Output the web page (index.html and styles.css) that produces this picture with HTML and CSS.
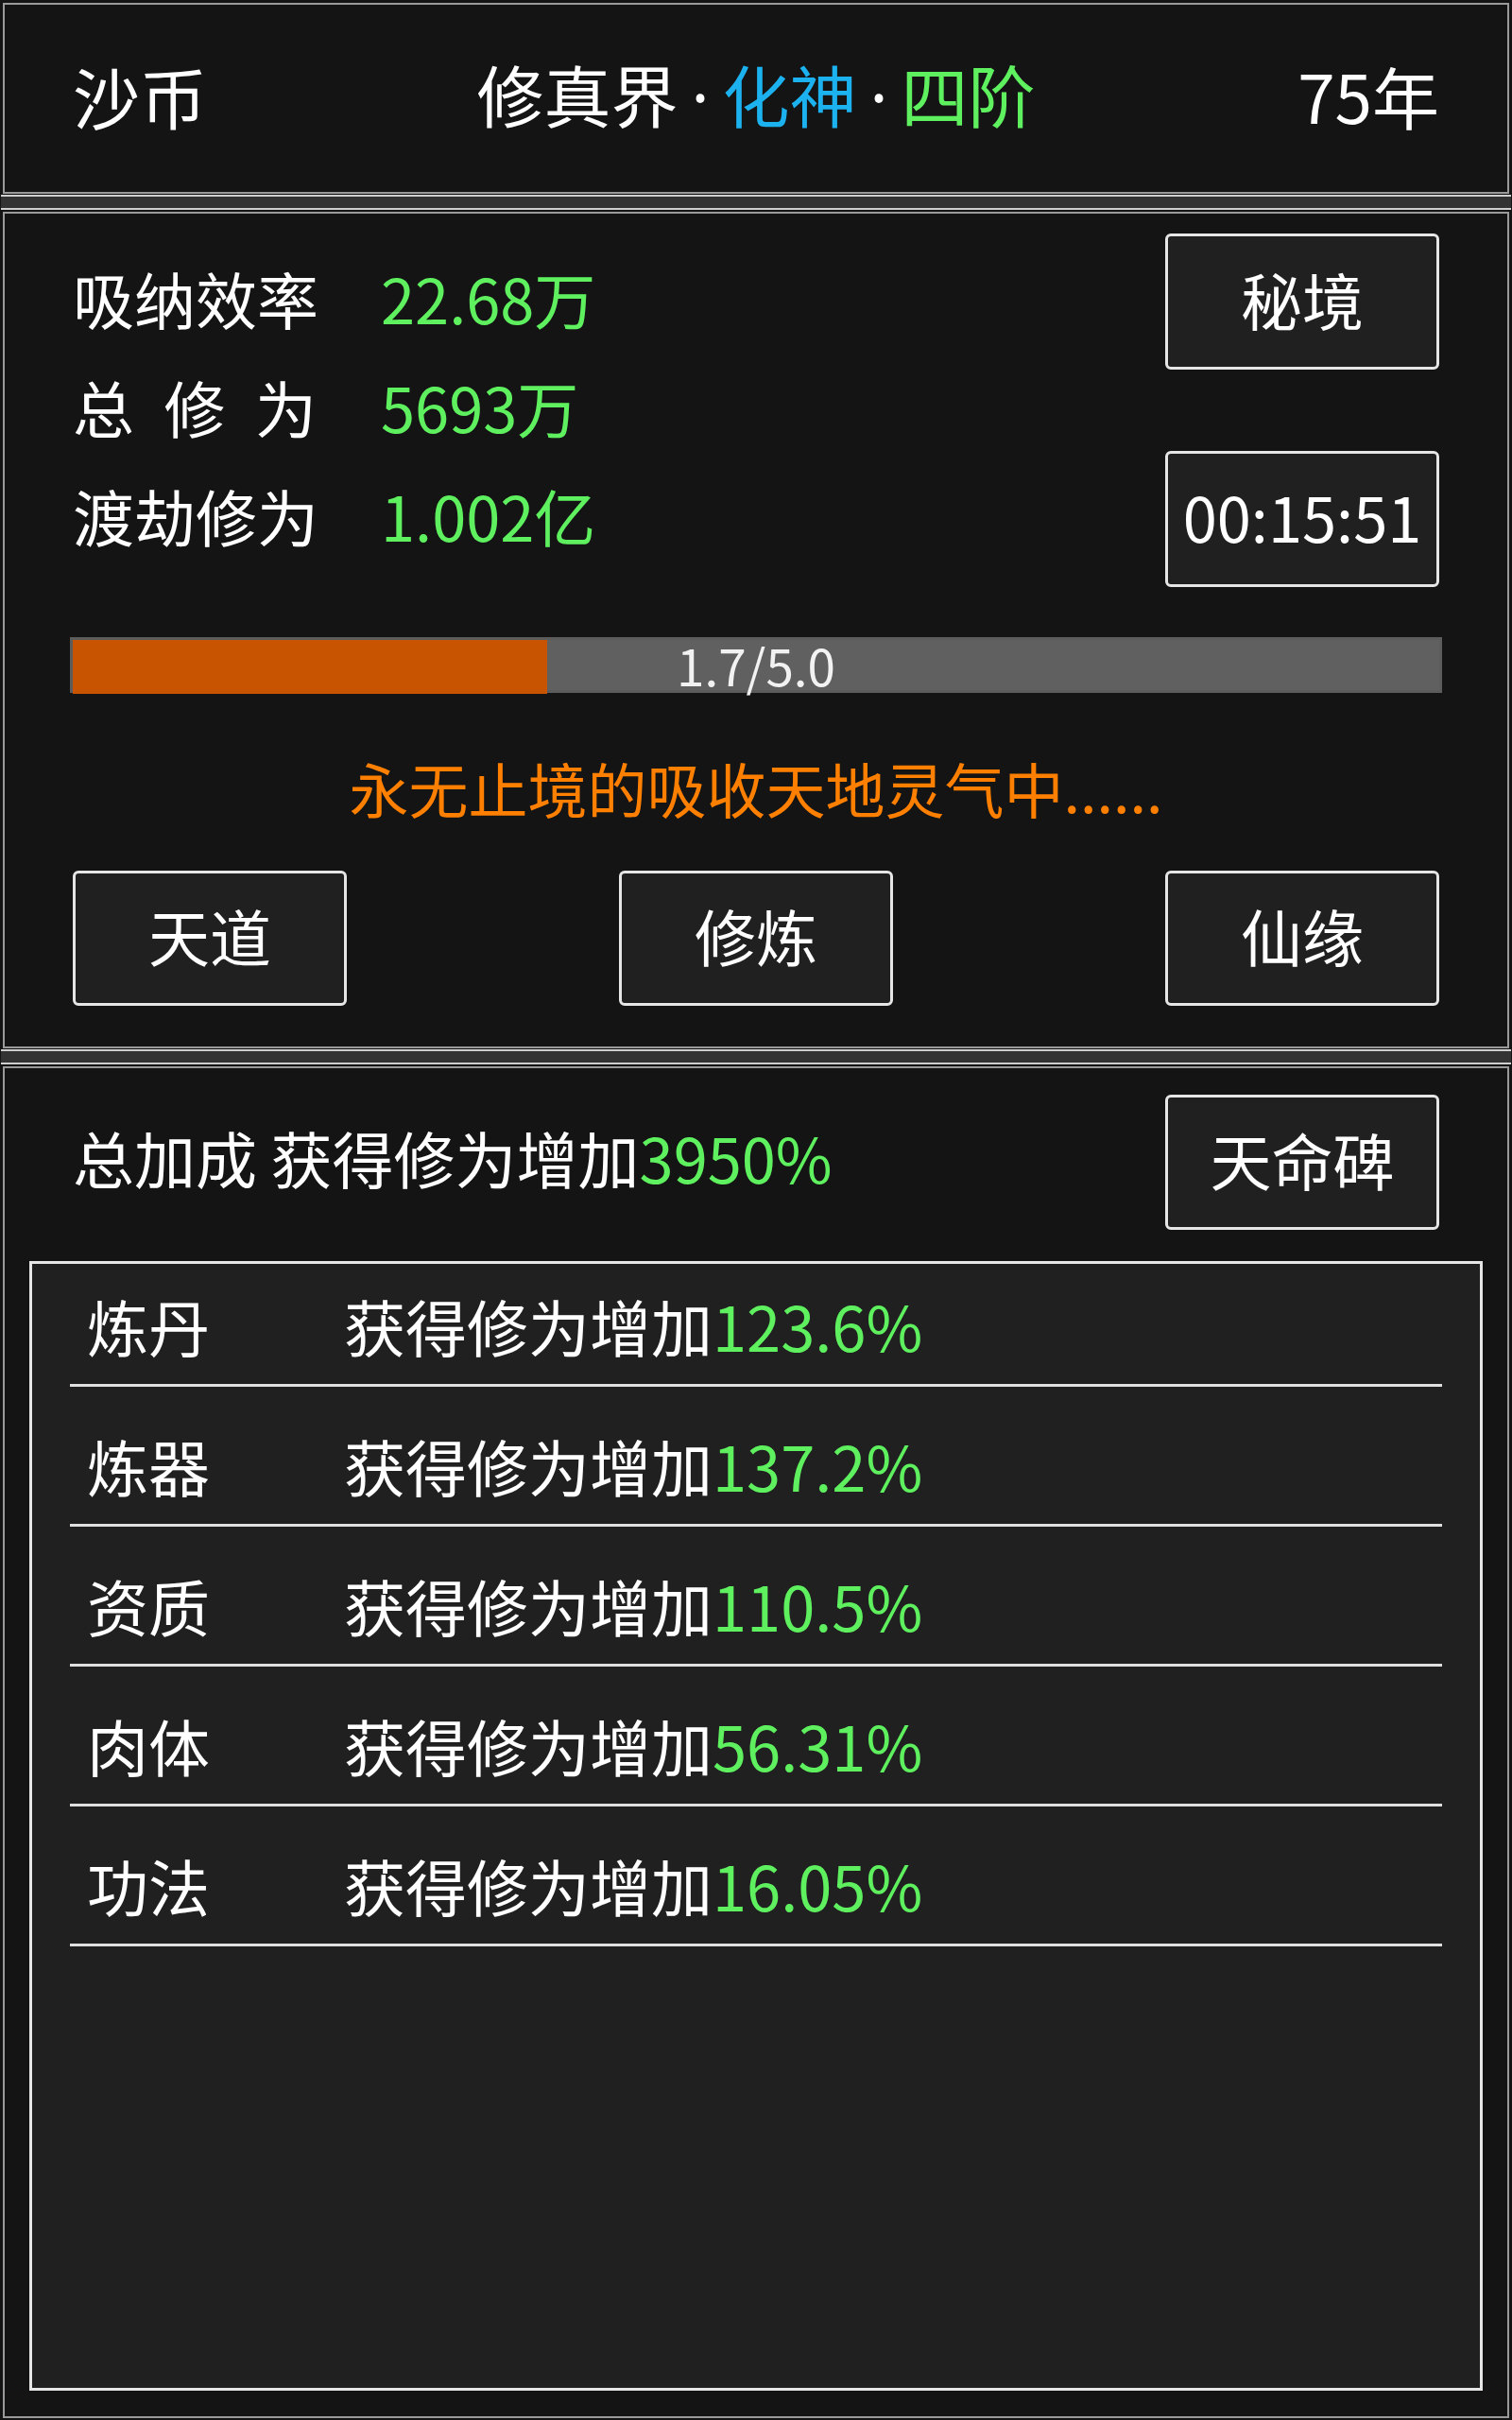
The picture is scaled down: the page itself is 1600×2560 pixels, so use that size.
FILE: index.html
```html
<!DOCTYPE html>
<html lang="zh-CN">
<head>
<meta charset="utf-8">
<title>修真界</title>
<link rel="stylesheet" href="styles.css">
</head>
<body>
<div class="app">
  <header class="panel header">
    <div class="hd-left">沙币</div>
    <div class="hd-center">修真界<span class="dot">·</span><span class="cyan">化神</span><span class="dot">·</span><span class="green">四阶</span></div>
    <div class="hd-right">75年</div>
  </header>
  <div class="band"></div>
  <section class="panel main">
    <div class="stat-row r1">
      <div class="label">吸纳效率</div>
      <div class="value">22.68万</div>
      <div class="btn">秘境</div>
    </div>
    <div class="stat-row r2">
      <div class="label spread"><span>总</span><span>修</span><span>为</span></div>
      <div class="value">5693万</div>
    </div>
    <div class="stat-row r3">
      <div class="label">渡劫修为</div>
      <div class="value">1.002亿</div>
      <div class="btn">00:15:51</div>
    </div>
    <div class="bar">
      <div class="bar-fill" style="width:34.7%"></div>
      <div class="bar-text">1.7/5.0</div>
    </div>
    <div class="notice">永无止境的吸收天地灵气中......</div>
    <div class="actions">
      <div class="btn">天道</div>
      <div class="btn">修炼</div>
      <div class="btn">仙缘</div>
    </div>
  </section>
  <div class="band"></div>
  <section class="panel bonus">
    <div class="bonus-head">
      <div class="total">总加成 获得修为增加<span class="green">3950%</span></div>
      <div class="btn">天命碑</div>
    </div>
    <div class="list">
      <div class="item"><span class="name">炼丹</span><span class="desc">获得修为增加<span class="green">123.6%</span></span></div>
      <div class="item"><span class="name">炼器</span><span class="desc">获得修为增加<span class="green">137.2%</span></span></div>
      <div class="item"><span class="name">资质</span><span class="desc">获得修为增加<span class="green">110.5%</span></span></div>
      <div class="item"><span class="name">肉体</span><span class="desc">获得修为增加<span class="green">56.31%</span></span></div>
      <div class="item"><span class="name">功法</span><span class="desc">获得修为增加<span class="green">16.05%</span></span></div>
    </div>
  </section>
</div>
</body>
</html>
```

FILE: styles.css
```css
* { box-sizing: border-box; }
html, body {
  margin: 0;
  padding: 0;
  background: #141414;
}
body {
  width: 1600px;
  height: 2560px;
  font-family: "Noto Sans CJK SC", "Noto Sans", sans-serif;
  color: #ffffff;
  font-size: 65px;
}
.app {
  padding: 3px 3px 0;
  display: flex;
  flex-direction: column;
}
.panel {
  border: 2px solid #9a9a9a;
  background: #141414;
}
.band {
  margin: 1px -2px 2px;
  height: 16px;
  background: #333333;
  border-top: 2px solid #cfcfcf;
  border-bottom: 2px solid #cfcfcf;
}
.green { color: #5ef05e; }
.cyan { color: #1cb2ef; }

/* header */
.header {
  height: 202px;
  padding: 0 72px 8px;
  display: grid;
  grid-template-columns: 1fr auto 1fr;
  align-items: center;
  font-size: 71px;
  line-height: 1;
}
.hd-left { justify-self: start; }
.hd-right { justify-self: end; }
.hd-center { white-space: nowrap; }
.dot {
  font-family: "Noto Sans", sans-serif;
  display: inline-block;
  padding: 0 14px;
}

/* main panel */
.main {
  height: 885px;
  padding: 21px 72px 0;
  display: flex;
  flex-direction: column;
}
.stat-row {
  display: flex;
  align-items: center;
  line-height: 1;
}
.stat-row .label,
.stat-row .value { padding-bottom: 8px; }
.r1 { height: 144px; }
.r2 { height: 86px; }
.r3 { height: 144px; }
.label {
  width: 326px;
  flex: none;
}
.spread {
  display: flex;
  justify-content: space-between;
  width: 258px;
  margin-right: 68px;
}
.value {
  color: #5ef05e;
  flex: 1;
}
.btn {
  flex: none;
  width: 290px;
  height: 144px;
  padding-bottom: 6px;
  border: 3px solid #e6e6e6;
  border-radius: 6px;
  background: #202020;
  display: flex;
  align-items: center;
  justify-content: center;
  font-size: 65px;
  line-height: 1;
  color: #ffffff;
}
.bar {
  margin: 53px -3px 0;
  height: 59px;
  background: #606060;
  border: 3px solid #5c5c5c;
  display: grid;
}
.bar-fill {
  grid-area: 1 / 1;
  background: #c85300;
  height: 100%;
}
.bar-text {
  grid-area: 1 / 1;
  justify-self: center;
  align-self: center;
  font-size: 53px;
  line-height: 1;
  padding-bottom: 4px;
  color: #f2f2f2;
}
.notice {
  margin-top: 60px;
  text-align: center;
  color: #ff8000;
  font-size: 63px;
  line-height: 80px;
}
.actions {
  margin-top: 48px;
  display: flex;
  justify-content: space-between;
}
.actions .btn { height: 143px; }

/* bonus panel */
.bonus {
  height: 1430px;
  padding: 28px 26px 0;
  display: flex;
  flex-direction: column;
}
.bonus-head {
  height: 143px;
  padding: 0 46px;
  display: flex;
  align-items: center;
  justify-content: space-between;
  line-height: 1;
}
.total { padding-bottom: 10px; }
.bonus-head .btn { height: 143px; }
.list {
  margin-top: 33px;
  height: 1195px;
  border: 3px solid #e6e6e6;
  background: #202020;
}
.item {
  margin: 0 40px;
  padding: 44px 0 23px 18px;
  line-height: 78px;
  border-bottom: 3px solid #e0e0e0;
  display: flex;
}
.item:first-child { padding-top: 26px; }
.name {
  width: 272px;
  flex: none;
}
```
